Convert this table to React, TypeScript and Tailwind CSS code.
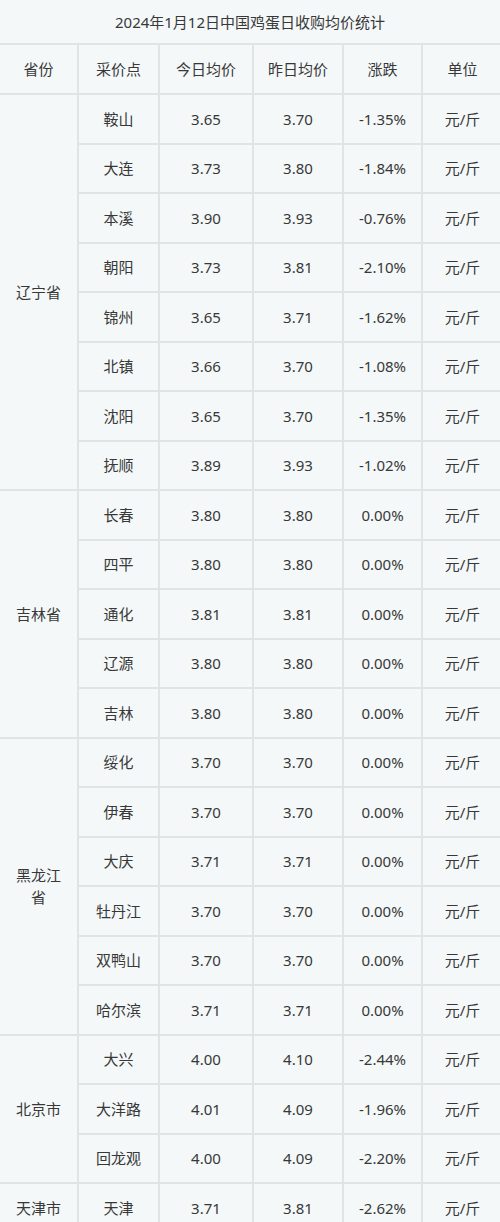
import React from 'react';

type Row = { site: string; today: string; yday: string; change: string };

const groups: { province: string; rows: Row[] }[] = [
  {
    province: '辽宁省',
    rows: [
      { site: '鞍山', today: '3.65', yday: '3.70', change: '-1.35%' },
      { site: '大连', today: '3.73', yday: '3.80', change: '-1.84%' },
      { site: '本溪', today: '3.90', yday: '3.93', change: '-0.76%' },
      { site: '朝阳', today: '3.73', yday: '3.81', change: '-2.10%' },
      { site: '锦州', today: '3.65', yday: '3.71', change: '-1.62%' },
      { site: '北镇', today: '3.66', yday: '3.70', change: '-1.08%' },
      { site: '沈阳', today: '3.65', yday: '3.70', change: '-1.35%' },
      { site: '抚顺', today: '3.89', yday: '3.93', change: '-1.02%' },
    ],
  },
  {
    province: '吉林省',
    rows: [
      { site: '长春', today: '3.80', yday: '3.80', change: '0.00%' },
      { site: '四平', today: '3.80', yday: '3.80', change: '0.00%' },
      { site: '通化', today: '3.81', yday: '3.81', change: '0.00%' },
      { site: '辽源', today: '3.80', yday: '3.80', change: '0.00%' },
      { site: '吉林', today: '3.80', yday: '3.80', change: '0.00%' },
    ],
  },
  {
    province: '黑龙江省',
    rows: [
      { site: '绥化', today: '3.70', yday: '3.70', change: '0.00%' },
      { site: '伊春', today: '3.70', yday: '3.70', change: '0.00%' },
      { site: '大庆', today: '3.71', yday: '3.71', change: '0.00%' },
      { site: '牡丹江', today: '3.70', yday: '3.70', change: '0.00%' },
      { site: '双鸭山', today: '3.70', yday: '3.70', change: '0.00%' },
      { site: '哈尔滨', today: '3.71', yday: '3.71', change: '0.00%' },
    ],
  },
  {
    province: '北京市',
    rows: [
      { site: '大兴', today: '4.00', yday: '4.10', change: '-2.44%' },
      { site: '大洋路', today: '4.01', yday: '4.09', change: '-1.96%' },
      { site: '回龙观', today: '4.00', yday: '4.09', change: '-2.20%' },
    ],
  },
  {
    province: '天津市',
    rows: [{ site: '天津', today: '3.71', yday: '3.81', change: '-2.62%' }],
  },
];

const cell = 'border-2 border-[#dfe5e5] text-center align-middle px-[10px] p-0';

export default function App() {
  return (
    <div
      className="w-[500px] h-[1222px] overflow-hidden bg-[#f4f8f8] text-[#383838] text-[15px] leading-[22px]"
      style={{ fontFamily: '"Noto Sans", "Noto Sans CJK SC", sans-serif' }}
    >
      <div className="h-[43px] flex items-center justify-center">
        2024年1月12日中国鸡蛋日收购均价统计
      </div>
      <table className="w-[504px] -ml-[2px] table-fixed border-collapse">
        <colgroup>
          <col className="w-[79px]" />
          <col className="w-[81px]" />
          <col className="w-[94px]" />
          <col className="w-[90px]" />
          <col className="w-[79px]" />
          <col className="w-[81px]" />
        </colgroup>
        <thead>
          <tr className="h-[50px]">
            <th className={`${cell} font-normal`}>省份</th>
            <th className={`${cell} font-normal`}>采价点</th>
            <th className={`${cell} font-normal`}>今日均价</th>
            <th className={`${cell} font-normal`}>昨日均价</th>
            <th className={`${cell} font-normal`}>涨跌</th>
            <th className={`${cell} font-normal`}>单位</th>
          </tr>
        </thead>
        <tbody>
          {groups.map((g) =>
            g.rows.map((r, i) => (
              <tr key={g.province + r.site} className="h-[49.5px]">
                {i === 0 && (
                  <td rowSpan={g.rows.length} className={cell}>
                    {g.province}
                  </td>
                )}
                <td className={cell}>{r.site}</td>
                <td className={cell}>{r.today}</td>
                <td className={cell}>{r.yday}</td>
                <td className={cell}>{r.change}</td>
                <td className={cell}>元/斤</td>
              </tr>
            ))
          )}
        </tbody>
      </table>
    </div>
  );
}
